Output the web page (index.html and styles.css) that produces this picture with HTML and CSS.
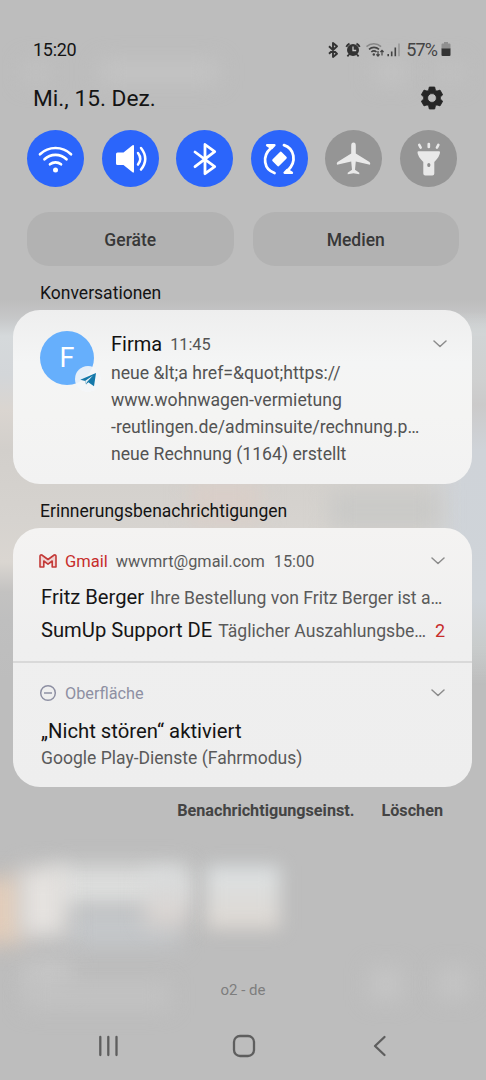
FILE: index.html
```html
<!DOCTYPE html>
<html lang="de">
<head>
<meta charset="utf-8">
<title>Benachrichtigungen</title>
<link rel="stylesheet" href="styles.css">
</head>
<body>
<div class="screen">
  <div class="wallpaper">
    <i class="blob top-left"></i><i class="blob top-title"></i><i class="blob top-right"></i><i class="blob top-right2"></i>
    <i class="band"></i><i class="blob band-pink"></i><i class="blob band-gray"></i>
    <i class="blob b-orange"></i><i class="blob b-mid"></i><i class="blob b-midlow"></i><i class="blob b-white"></i><i class="blob b-pink"></i><i class="blob b-right"></i>
    <i class="blob b-text"></i><i class="blob b-text2"></i><i class="blob b-btn"></i><i class="blob b-btn2"></i>
  </div>

  <header class="status">
    <span class="clock">15:20</span>
    <svg class="status-icons" width="75" height="20" viewBox="0 0 75 20">
      <path d="M2 6.300l8 7.400-4 3.300V3l4 3.300-8 7.400" fill="none" stroke="#333" stroke-width="1.900" stroke-linejoin="round"/>
      <circle cx="26" cy="10" r="6" fill="#333"/>
      <path d="M19.300 6.800a7 7 0 0 1 3.200-3.200M32.700 6.800a7 7 0 0 0-3.200-3.200M22 14.500l-1.600 1.800M30 14.500l1.600 1.800" fill="none" stroke="#333" stroke-width="1.800"/>
      <path d="M26 6.500v4h3.200" fill="none" stroke="#c8c8c8" stroke-width="1.300"/>
      <path d="M39.500 6.600a11 11 0 0 1 14.600 0" fill="none" stroke="#888" stroke-width="1.500"/>
      <path d="M42 9.300a7.500 7.500 0 0 1 10 0M44.300 12a4 4 0 0 1 5.200 0" fill="none" stroke="#444" stroke-width="1.600"/>
      <circle cx="46.800" cy="14.500" r="1.200" fill="#444"/>
      <path d="M51 11v5M49.400 14.300l1.600 1.700 1.600-1.700M55 15.500v-5M53.400 12l1.600-1.700 1.600 1.700" fill="none" stroke="#444" stroke-width="1.200"/>
      <path d="M61.200 14v2.200M64.700 11.500v4.700M68.300 7.500v8.700" stroke="#444" stroke-width="1.600"/>
      <path d="M72 3.500v12.700" stroke="#929292" stroke-width="1.400"/>
    </svg>
    <span class="percent">57%</span>
    <svg class="battery" width="10" height="14" viewBox="0 0 10 14">
      <path d="M3 0h4v1.500h1.500q1 0 1 1V7h-9V2.500q0-1 1-1H3z" fill="#909090"/>
      <path d="M.5 6.500h9V13q0 1-1 1h-7q-1 0-1-1z" fill="#333"/>
    </svg>
  </header>

  <div class="daterow">
    <span class="date">Mi., 15. Dez.</span>
    <svg width="24" height="24" viewBox="0 0 24 24"><path fill="#252525" stroke="#252525" stroke-width=".8" stroke-linejoin="round" fill-rule="evenodd" d="M9.300 1h5.400l.7 3.200 1.500.9 3.100-1 2.700 4.700-2.400 2.200v2l2.400 2.200-2.700 4.700-3.100-1-1.500.9-.7 3.200H9.300l-.7-3.200-1.500-.9-3.100 1-2.700-4.700L3.700 13v-2L1.300 8.800 4 4.100l3.100 1 1.500-.9zM12 7.600a4.400 4.400 0 1 0 0 8.800 4.400 4.400 0 0 0 0-8.800z"/></svg>
  </div>

  <div class="toggles">
    <span class="toggle on"><svg width="57" height="57" viewBox="0 0 57 57"><g fill="none" stroke="#fff" stroke-width="2.700" stroke-linecap="round"><path d="M13 24.200a22.500 22.500 0 0 1 31 0M17.500 29.300a16 16 0 0 1 22 0M23 34.300a8.500 8.500 0 0 1 11 0"/></g><circle cx="28.500" cy="40" r="2.500" fill="#fff"/></svg></span>
    <span class="toggle on"><svg width="57" height="57" viewBox="0 0 57 57"><path d="M15.500 22.500h6l9-7.200q1.500-1 1.500 1v25q0 2-1.500 1l-9-7.200h-6q-1.500 0-1.500-1.500v-9.600q0-1.500 1.500-1.500z" fill="#fff"/><path d="M36 23q4.500 5.800 0 11.600M39 18q8.500 10.800 0 21.600" fill="none" stroke="#fff" stroke-width="2.500" stroke-linecap="round"/></svg></span>
    <span class="toggle on"><svg width="57" height="57" viewBox="0 0 57 57"><path d="M19 22l19.700 14.700L29 43.700V14.500l9.700 7.200L19 36.700" fill="none" stroke="#fff" stroke-width="2.800" stroke-linecap="round" stroke-linejoin="round"/></svg></span>
    <span class="toggle on"><svg width="57" height="57" viewBox="0 0 57 57"><rect x="22" y="24.300" width="13" height="9.400" rx="1.500" transform="rotate(-45 28.500 29)" fill="#fff"/><g fill="none" stroke="#fff" stroke-width="2.800" stroke-linecap="round"><path d="M23.500 43C13 39.500 10.500 26.500 20 18M33 15.200c10.500 3.500 13 16.500 4 25"/></g><path d="M16 15.200h7.500l-2.800 3z M41 42.800h-7.500l2.800-3z" fill="#fff" stroke="#fff" stroke-width="2.200" stroke-linejoin="round"/></svg></span>
    <span class="toggle"><svg width="57" height="57" viewBox="0 0 57 57"><path d="M28.500 12.600q2.300 0 2.300 3.200V23.500l13.700 8.500q1.200 1 .5 2.700l-14.200-3.200-.8 8.200 4.300 3v1.600l-5.800-1-5.800 1v-1.600l4.300-3-.8-8.200L12 34.700q-.7-1.700.5-2.700l13.700-8.500v-7.700q0-3.200 2.300-3.200z" fill="#e9e9e9"/></svg></span>
    <span class="toggle"><svg width="57" height="57" viewBox="0 0 57 57"><path d="M18.500 21.300h20.500q1 0 1 1 0 4-5.700 9.700v11.500q0 2-2 2h-7q-2 0-2-2V32q-5.800-5.700-5.800-9.700 0-1 1-1z" fill="#e9e9e9"/><path d="M19.300 15l1.300 2.500M28.800 14v3M38.300 15l-1.300 2.500" stroke="#e9e9e9" stroke-width="2.700" stroke-linecap="round"/><rect x="27.300" y="33" width="3" height="4" rx="1.500" fill="#8d8d8d"/></svg></span>
  </div>

  <div class="panels"><span class="panel">Geräte</span><span class="panel">Medien</span></div>

  <h2 class="section first">Konversationen</h2>
  <article class="card conversation">
    <div class="avatar">F
      <span class="badge"><svg width="26" height="26" viewBox="0 0 26 26"><path d="M5.300 13.800L21 7 19 20.300l-5.700-4.100-2.300 2.300-.7-3.500z" fill="#1478aa"/><path d="M10.300 14.800L18 9.500 12 16l-1 2.300z" fill="#e3eef4"/></svg></span>
    </div>
    <div class="message">
      <div class="headline"><span class="sender">Firma</span><span class="time">11:45</span>
        <svg class="chevron" width="14" height="8" viewBox="0 0 14 8"><path d="M1 1l6 5.500L13 1"/></svg></div>
      <p>neue &amp;lt;a href=&amp;quot;https://</p>
      <p>www.wohnwagen-vermietung</p>
      <p>-reutlingen.de/adminsuite/rechnung.p…</p>
      <p>neue Rechnung (1164) erstellt</p>
    </div>
  </article>

  <h2 class="section second">Erinnerungsbenachrichtigungen</h2>
  <section class="card reminders">
    <article class="mail">
      <div class="source"><svg class="app" width="18" height="14" viewBox="0 0 18 14"><path d="M1 2.300Q1 .6 2.800 1L9 5.500 15.200 1Q17 .6 17 2.300V13h-3.800V7L9 10.200 4.800 7V13H1z" fill="#f0d4d3" stroke="#c33a38" stroke-width="1.600" stroke-linejoin="round"/></svg>
        <span class="gmail">Gmail</span><span class="account">wwvmrt@gmail.com</span><span class="mailtime">15:00</span>
        <svg class="chevron" width="14" height="8" viewBox="0 0 14 8"><path d="M1 1l6 5.500L13 1"/></svg></div>
      <div class="line"><span class="from">Fritz Berger</span><span class="subject">Ihre Bestellung von Fritz Berger ist a…</span></div>
      <div class="line"><span class="from">SumUp Support DE</span><span class="subject">Täglicher Auszahlungsbe…</span><span class="count">2</span></div>
    </article>
    <article class="dnd">
      <div class="source"><svg class="app" width="18" height="18" viewBox="0 0 18 18"><g fill="none" stroke="#8e90a3" stroke-width="1.500"><circle cx="9" cy="9" r="7.300"/><path d="M5 9h8"/></g></svg>
        <span class="surface">Oberfläche</span>
        <svg class="chevron" width="14" height="8" viewBox="0 0 14 8"><path d="M1 1l6 5.500L13 1"/></svg></div>
      <div class="dnd-title">„Nicht stören“ aktiviert</div>
      <div class="dnd-text">Google Play-Dienste (Fahrmodus)</div>
    </article>
  </section>

  <div class="actions"><span>Benachrichtigungseinst.</span><span>Löschen</span></div>
  <div class="carrier">o2 - de</div>
  <nav class="nav">
    <svg width="22" height="22" viewBox="0 0 22 22"><path d="M3.300 2v18M11.300 2v18M19.500 2v18"/></svg>
    <svg class="home" width="24" height="24" viewBox="0 0 24 24"><rect x="2" y="2" width="20" height="20" rx="6"/></svg>
    <svg class="back" width="14" height="22" viewBox="0 0 14 22"><path d="M11.500 2L2 11l9.500 9"/></svg>
  </nav>
</div>
</body>
</html>
```

FILE: styles.css
```css
* { box-sizing: border-box; }
body { margin: 0; background: #bdbdbd; }
.screen { position: relative; width: 486px; height: 1080px; overflow: hidden; background: #bdbdbd; font-family: Roboto, "Liberation Sans", sans-serif; color: #141414; display: flex; flex-direction: column; white-space: nowrap; isolation: isolate; }
.screen svg { display: block; flex: none; }
p, h2 { margin: 0; font-weight: 400; }

/* blurred background behind the shade */
.wallpaper { position: absolute; inset: 0; z-index: -1; }
.blob { position: absolute; filter: blur(11px); }
.top-left { left: 24px; top: 62px; width: 24px; height: 20px; background: #c2c2c2; }
.top-title { left: 100px; top: 62px; width: 118px; height: 20px; background: #c5c5c5; }
.top-right { left: 375px; top: 62px; width: 32px; height: 20px; background: #c4c4c4; }
.top-right2 { left: 438px; top: 62px; width: 24px; height: 20px; background: #c2c2c2; }
.band { position: absolute; left: 0; right: 0; top: 300px; height: 400px; background: linear-gradient(to bottom, #bdbdbd00 0, #c6c7c8 18px, #d5d9db 36px, #d3d6d9 75px, #dad5d0 110px, #d2cfcb 150px, #d6d3cf 220px, #dad6d1 262px, #c3c2c1 292px, #bfbfbf 320px, #bdbdbd00 380px); }
.band::after { content: ""; position: absolute; right: 0; top: 0; width: 70px; height: 400px; background: linear-gradient(to bottom, #bdbdbd00 10px, #d1d4d5 36px, #cfd0d0 80px, #cbcaca 105px, #cfd3d8 150px, #cfd4d9 300px, #c9cccc 345px, #bdbdbd00 385px); mask-image: linear-gradient(to right, transparent, #000 45px); }
.band-pink { left: 190px; top: 480px; width: 70px; height: 45px; background: #d9cec8; }
.band-gray { left: 330px; top: 490px; width: 110px; height: 40px; background: #c9c9c7; }
.b-orange { left: -20px; top: 878px; width: 42px; height: 66px; background: #e3cdba; }
.b-white { left: 20px; top: 868px; width: 46px; height: 68px; background: #e5e2df; }
.b-mid { left: 50px; top: 866px; width: 138px; height: 40px; background: #dddedd; }
.b-midlow { left: 70px; top: 910px; width: 110px; height: 36px; background: #c4c7ca; }
.b-pink { left: 145px; top: 872px; width: 43px; height: 54px; background: linear-gradient(#d8dcde, #dbd3ce); }
.b-right { left: 206px; top: 866px; width: 74px; height: 63px; background: linear-gradient(#dce1e3, #ddd7d1); filter: blur(9px); }
.b-text { left: 24px; top: 960px; width: 48px; height: 28px; background: #c7c7c7; }
.b-text2 { left: 24px; top: 984px; width: 145px; height: 24px; background: #c3c3c3; }
.b-btn { left: 370px; top: 968px; width: 32px; height: 32px; background: #c5c5c5; }
.b-btn2 { left: 438px; top: 968px; width: 30px; height: 30px; background: #c5c5c5; }

.status { height: 20px; margin: 40px 35px 0 33px; display: flex; align-items: center; }
.clock { font-size: 18px; letter-spacing: -.3px; margin-top: -1px; }
.status-icons { margin-left: auto; margin-right: 4px; margin-top: -1px; }
.percent { font-size: 18px; color: #444; letter-spacing: -.9px; margin-top: -1px; }
.battery { margin-left: 4px; margin-top: -2px; }

.daterow { height: 28px; margin: 24px 42px 0 33px; display: flex; align-items: center; justify-content: space-between; }
.date { font-size: 22.700px; margin-top: 1px; }

.toggles { display: flex; justify-content: space-between; margin: 18px 29px 0 27px; }
.toggle { width: 57px; height: 57px; border-radius: 50%; background: #959595; }
.toggle.on { background: #2b65fb; }

.panels { display: grid; grid-template-columns: 1fr 1fr; gap: 19px; margin: 25px 27px 0; height: 54px; }
.panel { border-radius: 22px; background: #b2b2b2; display: flex; align-items: center; justify-content: center; font-size: 17.500px; font-weight: 500; color: #383838; padding-top: 2px; }

.section { height: 22px; line-height: 22px; margin-left: 40px; font-size: 17.550px; }
.first { margin-top: 16px; }
.second { margin-top: 16px; }
.card { margin: 0 14px 0 13px; border-radius: 27px; background: #f0f0f0; }

.conversation { margin-top: 6px; height: 174px; padding: 19px 25px 0 27px; display: flex; background: linear-gradient(#eeeeee, #f4f5f5 30%, #f4f4f3 60%, #f2f2f2); }
.avatar { position: relative; width: 54px; height: 54px; margin-top: 2px; border-radius: 50%; background: #66affc; color: #fff; font-size: 27px; line-height: 54px; text-align: center; }
.badge { position: absolute; left: 35px; top: 35px; width: 26px; height: 26px; border-radius: 50%; background: #f4f6f8e6; }
.message { margin-left: 17px; flex: 1; color: #535353; font-size: 17.650px; }
.headline { display: flex; align-items: center; height: 30px; margin-bottom: 1px; }
.sender { font-size: 20px; color: #111; }
.time { font-size: 16.300px; margin-left: 8px; }
.chevron { margin-left: auto; }
.chevron path { fill: none; stroke: #8c8c8c; stroke-width: 1.500; stroke-linecap: round; stroke-linejoin: round; }
.message p { height: 27px; line-height: 27px; }

.reminders { margin-top: 6px; height: 259px; background: linear-gradient(#f4f3f2, #efefef 45%, #eeeeee); overflow: hidden; }
.mail { height: 135px; border-bottom: 2px solid #d9d9d9; padding: 21px 27px 0 28px; }
.source { display: flex; align-items: center; height: 24px; font-size: 16.300px; color: #5a5a5a; }
.app { margin-left: -2px; }
.gmail { color: #c72d2b; margin-left: 8px; font-size: 16.500px; }
.account { margin-left: 8px; }
.mailtime { margin-left: 9px; }
.line { display: flex; align-items: baseline; height: 33px; line-height: 33px; }
.source + .line { margin-top: 8px; }
.from { font-size: 20.200px; color: #161616; }
.subject { font-size: 17.600px; color: #5a5a5a; margin-left: 6px; }
.count { font-size: 18px; color: #c72d2b; margin-left: auto; }
.dnd { padding: 18px 27px 0 28px; }
.surface { color: #8e90a3; margin-left: 8px; }
.dnd-title { font-size: 20.300px; height: 30px; line-height: 30px; margin-top: 11px; color: #141414; }
.dnd-text { font-size: 17.550px; height: 24px; line-height: 24px; color: #5a5a5a; }

.actions { height: 24px; margin: 12px 43px 0 0; display: flex; justify-content: flex-end; gap: 27px; line-height: 24px; font-size: 16.200px; font-weight: 700; color: #444; }
.carrier { margin-top: 157px; height: 20px; line-height: 20px; text-align: center; font-size: 15px; color: #7d7d7d; }
.nav { display: flex; align-items: center; height: 24px; margin: 34px 0 0 97px; }
.nav svg { fill: none; stroke: #5e5e5e; stroke-width: 2.300; stroke-linecap: round; stroke-linejoin: round; }
.nav .home { margin-left: 113px; }
.nav .back { margin-left: 117px; }
```
